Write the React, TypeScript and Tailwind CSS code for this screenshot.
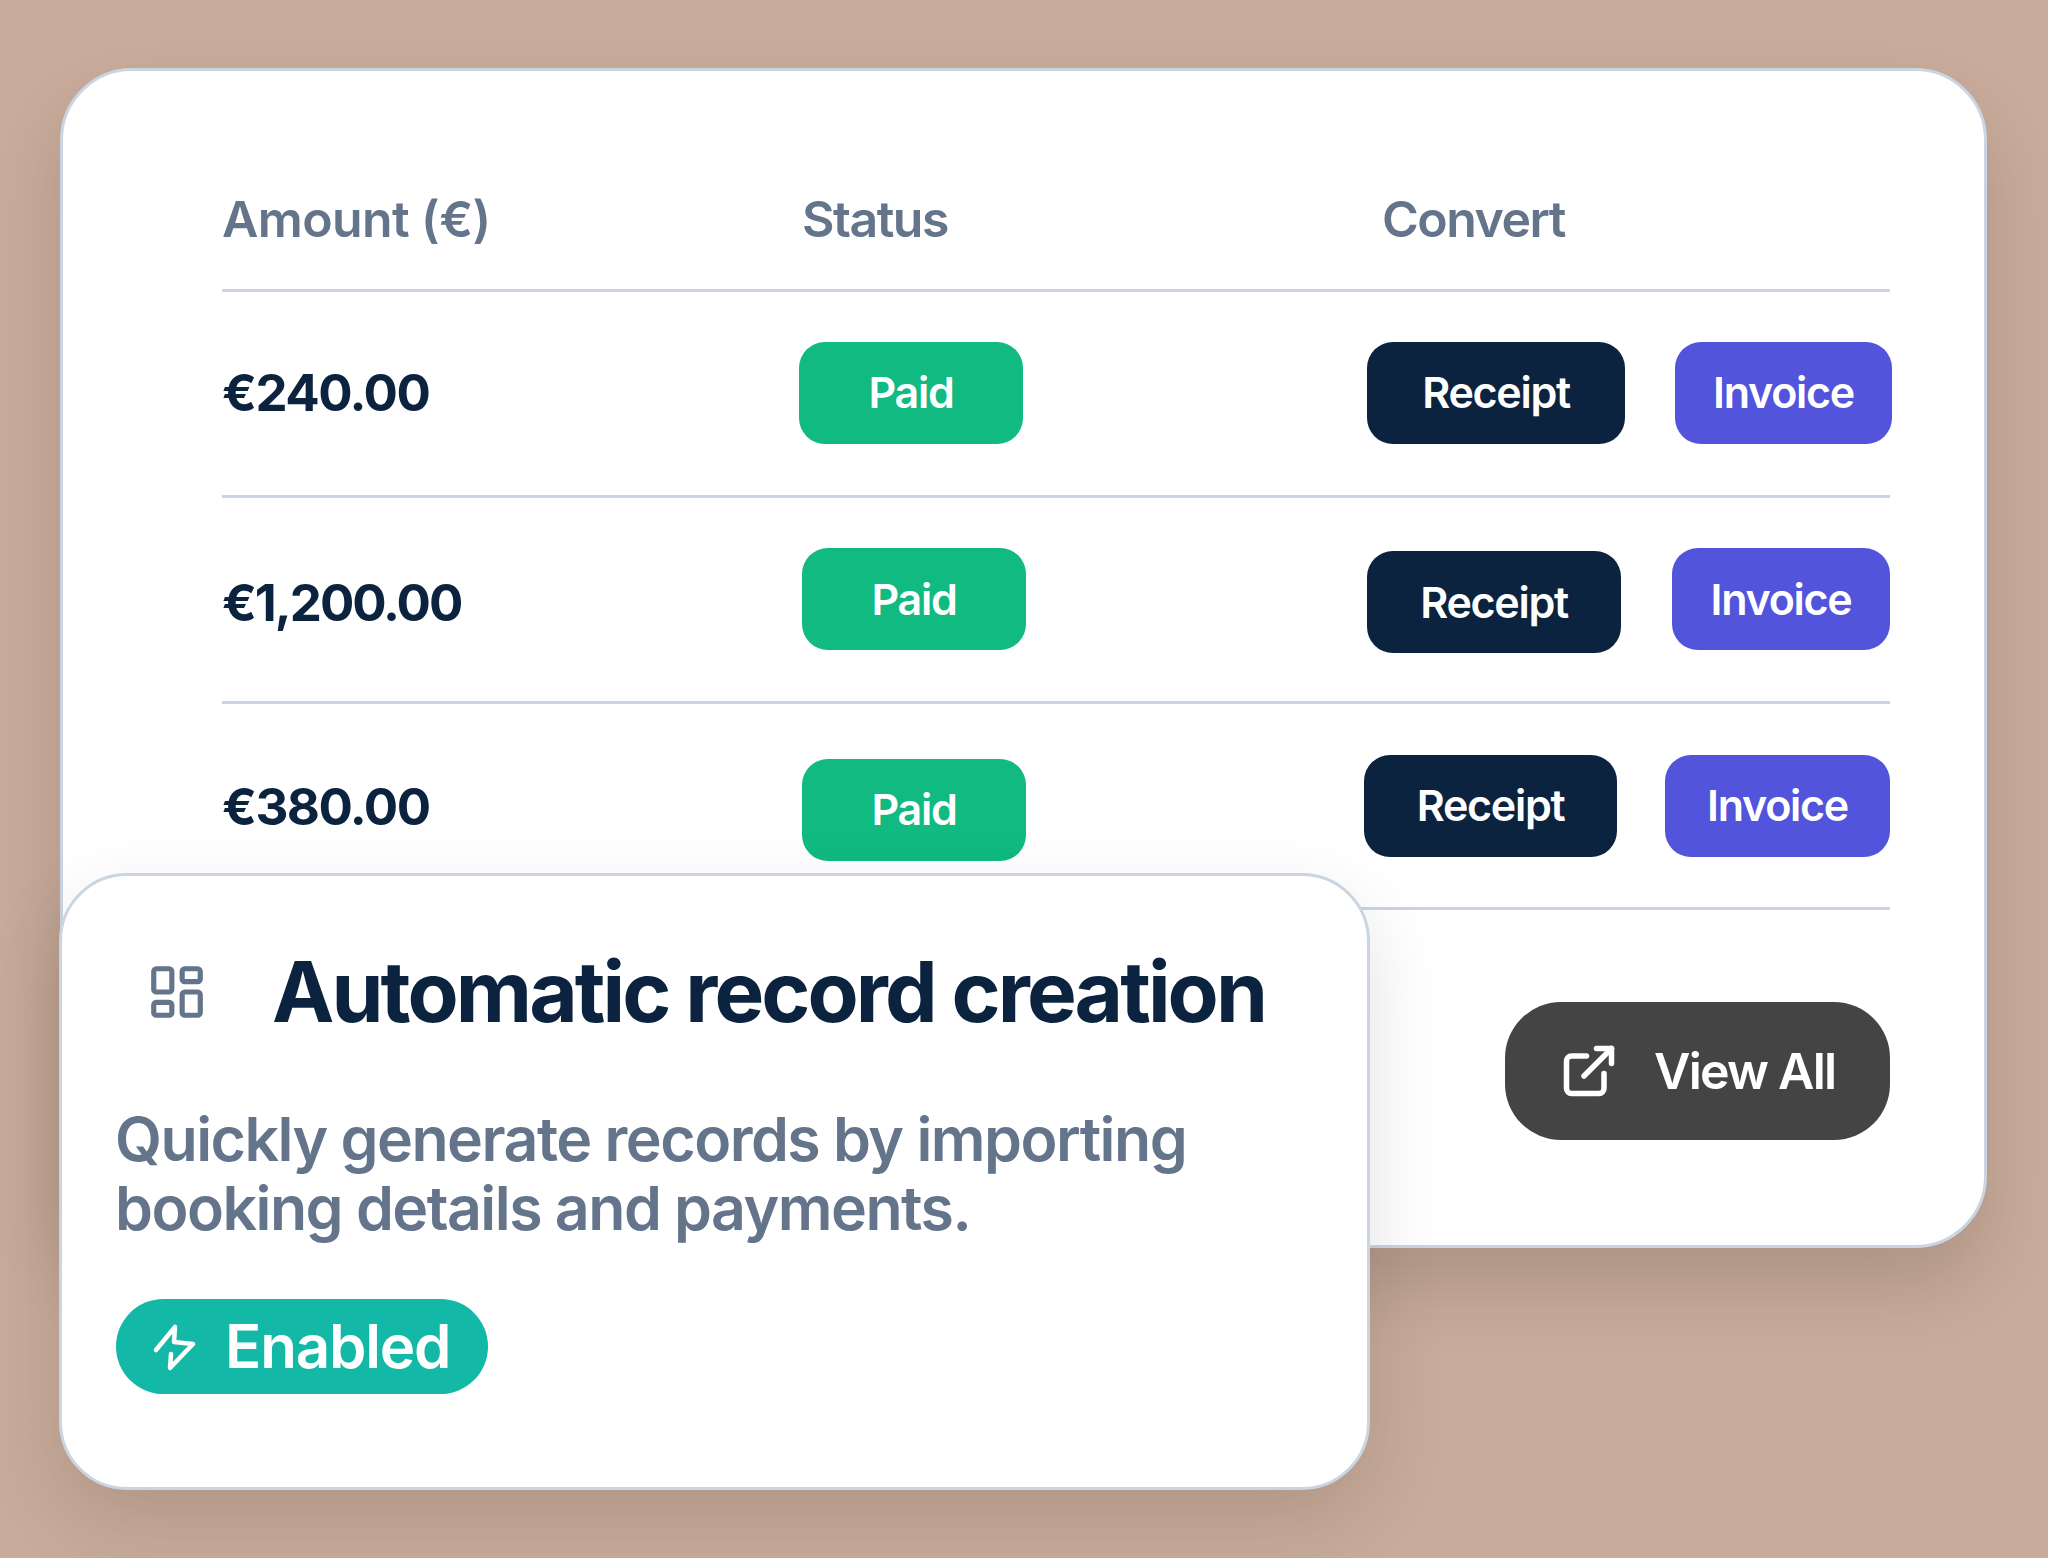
import React from 'react';
import { ExternalLink, LayoutDashboard } from 'lucide-react';

const font = { fontFamily: 'Inter, "Liberation Sans", sans-serif' };

function Pill({ className, children }: { className: string; children: React.ReactNode }) {
  return (
    <div className={`flex h-[102px] items-center justify-center rounded-[26px] text-[43px] font-semibold tracking-[-0.03em] text-white ${className}`}>
      {children}
    </div>
  );
}

function Row({ amount, amountClass, paid, receipt, invoice }: { amount: string; amountClass: string; paid: string; receipt: string; invoice: string }) {
  return (
    <div className="grid h-[206px] grid-cols-[580px_565px_1fr] items-center border-b-[3px] border-[#cbd5e1]">
      <div className={`text-[51px] font-bold text-[#0c2340] ${amountClass}`}>{amount}</div>
      <Pill className={`bg-[#10ba80] ${paid}`}>Paid</Pill>
      <div className="flex items-center justify-between">
        <Pill className={`bg-[#0c2340] ${receipt}`}>Receipt</Pill>
        <Pill className={`bg-[#5254dc] ${invoice}`}>Invoice</Pill>
      </div>
    </div>
  );
}

export default function App() {
  return (
    <div className="relative h-[1558px] w-[2048px] overflow-hidden bg-[#c8ab9a] pl-[60px] pt-[68px]" style={font}>
      <div className="h-[1180px] w-[1927px] rounded-[72px] border-[3px] border-[#cbd5e1] bg-white pl-[159px] pr-[94px] shadow-[0_40px_70px_rgba(0,0,0,0.13)]">
        <div className="grid h-[221px] grid-cols-[580px_580px_1fr] items-center border-b-[3px] border-[#cbd5e1] pt-[78px] text-[50px] font-semibold tracking-[-0.03em] text-[#64748b]">
          <div className="tracking-[-0.012em]">Amount (€)</div>
          <div>Status</div>
          <div>Convert</div>
        </div>
        <Row amount="€240.00" amountClass="tracking-[-0.03em]" paid="ml-[-3px] w-[224px] mt-[-2px]" receipt="w-[258px] mt-[-2px]" invoice="w-[217px] mr-[-2px] mt-[-2px]" />
        <Row amount="€1,200.00" amountClass="mt-[7px] tracking-[-0.04em]" paid="w-[224px] mt-[-1px]" receipt="mt-[5px] w-[254px]" invoice="w-[218px] mt-[-1px]" />
        <Row amount="€380.00" amountClass="mt-[3px] tracking-[-0.03em]" paid="w-[224px] mt-[8px]" receipt="ml-[-3px] w-[253px]" invoice="w-[225px]" />
        <div className="mt-[92px] flex justify-end">
          <div className="flex h-[138px] w-[385px] items-center rounded-[56px] bg-[#444444] pl-[54px] text-[50px] font-semibold tracking-[-0.035em] text-white">
            <ExternalLink size={60} strokeWidth={2.2} />
            <span className="ml-[35px]">View All</span>
          </div>
        </div>
      </div>

      <div className="absolute left-[59px] top-[873px] h-[617px] w-[1311px] rounded-[68px] border-[3px] border-[#cbd5e1] bg-white pl-[54px] shadow-[0_30px_80px_rgba(0,0,0,0.12)]">
        <div className="mt-[74px] flex items-center">
          <LayoutDashboard size={62} strokeWidth={2} className="ml-[30px] text-[#64748b]" />
          <h2 className="ml-[64px] text-[83.6px] font-bold leading-none tracking-[-0.035em] text-[#0c2340]">Automatic record creation</h2>
        </div>
        <p className="ml-[-1px] mt-[71px] text-[60.8px] font-semibold leading-[69px] tracking-[-0.025em] text-[#64748b]">
          Quickly generate records by importing
          <br />
          booking details and payments.
        </p>
        <div className="mt-[56px] flex h-[95px] w-[372px] items-center rounded-full bg-[#14b8a6] pl-[24px] text-[60px] font-semibold tracking-[-0.02em] text-white">
          <svg width="70" height="70" viewBox="0 0 70 70" fill="none" stroke="currentColor" strokeWidth="4.5" strokeLinecap="round" strokeLinejoin="round" className="shrink-0">
            <path d="M16 39 L35 16 L34 31 L53 33 L30 57 L31 43" />
          </svg>
          <span className="ml-[15px]">Enabled</span>
        </div>
      </div>
    </div>
  );
}
